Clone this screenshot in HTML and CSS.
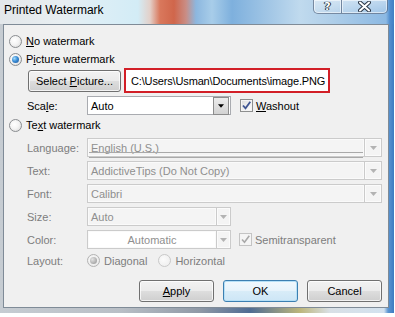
FILE: index.html
```html
<!DOCTYPE html>
<html>
<head>
<meta charset="utf-8">
<title>Printed Watermark</title>
<link rel="stylesheet" href="styles.css">
</head>
<body>
<div class="window">
  <div class="titlebar">
    <div class="title">Printed Watermark</div>
    <div class="caption">
      <div class="cbtn help"><span class="qmark">?</span></div>
      <div class="cbtn close">
        <svg width="13" height="11" viewBox="0 0 13 11"><path d="M2 1.5 L11 9.5 M11 1.5 L2 9.5" stroke="#2b3645" stroke-width="4" stroke-linecap="round"/><path d="M2 1.5 L11 9.5 M11 1.5 L2 9.5" stroke="#fff" stroke-width="2" stroke-linecap="round"/></svg>
      </div>
    </div>
  </div>
  <div class="client">
    <div class="opt"><span class="radio"></span><span><u>N</u>o watermark</span></div>
    <div class="opt r2"><span class="radio on"></span><span>P<u>i</u>cture watermark</span></div>
    <div class="pic-row">
      <div class="btn select-btn"><span>Select <u>P</u>icture...</span></div>
      <div class="path">C:\Users\Usman\Documents\image.PNG</div>
    </div>
    <div class="row scale-row">
      <span class="lbl">Sca<u>l</u>e:</span>
      <div class="combo short enabled">
        <span class="field">Auto</span>
        <span class="dd"><svg width="7" height="4" viewBox="0 0 7 4"><path d="M0 0H7L3.5 4Z" fill="#000"/></svg></span>
      </div>
      <span class="check"><svg width="11" height="11" viewBox="0 0 11 11"><path d="M2 5.5 L4.5 8.3 L9.3 1.8" fill="none" stroke="#3f5592" stroke-width="1.8"/></svg></span>
      <span class="check-lbl"><u>W</u>ashout</span>
    </div>
    <div class="opt r5"><span class="radio"></span><span>Te<u>x</u>t watermark</span></div>
    <div class="row dis first">
      <span class="lbl">Language:</span>
      <div class="combo full">
        <span class="field lang">English (U.S.)</span>
        <span class="dd"><svg width="7" height="4" viewBox="0 0 7 4"><path d="M0 0H7L3.5 4Z" fill="#b3b3b3"/></svg></span>
      </div>
    </div>
    <div class="row dis">
      <span class="lbl">Text:</span>
      <div class="combo full">
        <span class="field">AddictiveTips (Do Not Copy)</span>
        <span class="dd"><svg width="7" height="4" viewBox="0 0 7 4"><path d="M0 0H7L3.5 4Z" fill="#b3b3b3"/></svg></span>
      </div>
    </div>
    <div class="row dis">
      <span class="lbl">Font:</span>
      <div class="combo full">
        <span class="field">Calibri</span>
        <span class="dd"><svg width="7" height="4" viewBox="0 0 7 4"><path d="M0 0H7L3.5 4Z" fill="#b3b3b3"/></svg></span>
      </div>
    </div>
    <div class="row dis">
      <span class="lbl">Size:</span>
      <div class="combo short">
        <span class="field">Auto</span>
        <span class="dd"><svg width="7" height="4" viewBox="0 0 7 4"><path d="M0 0H7L3.5 4Z" fill="#b3b3b3"/></svg></span>
      </div>
    </div>
    <div class="row dis">
      <span class="lbl">Color:</span>
      <div class="combo short">
        <span class="field color">Automatic</span>
        <span class="dd"><svg width="7" height="4" viewBox="0 0 7 4"><path d="M0 0H7L3.5 4Z" fill="#b3b3b3"/></svg></span>
      </div>
      <span class="check disabled"><svg width="11" height="11" viewBox="0 0 11 11"><path d="M2 5.5 L4.5 8.3 L9.3 1.8" fill="none" stroke="#a9a9a9" stroke-width="1.6"/></svg></span>
      <span class="check-lbl">Semitransparent</span>
    </div>
    <div class="row dis layout-row">
      <span class="lbl">Layout:</span>
      <span class="radio dis-on"></span><span class="rtext">Diagonal</span>
      <span class="radio dis-off horiz"></span><span class="rtext">Horizontal</span>
    </div>
    <div class="buttons">
      <div class="btn"><span><u>A</u>pply</span></div>
      <div class="btn default"><span>OK</span></div>
      <div class="btn"><span>Cancel</span></div>
    </div>
  </div>
</div>
</body>
</html>
```
FILE: styles.css
```css
* { box-sizing: border-box; }
html, body { margin: 0; padding: 0; }
body {
  background: #fff;
  font-family: "Liberation Sans", Arial, sans-serif;
  font-size: 11px;
  color: #000;
}
.window {
  width: 394px;
  height: 313px;
  display: flex;
  flex-direction: column;
  background:
    linear-gradient(90deg, #e3e7ea 0px, #e8eef1 60px, #dceef6 100px, #d3ecf6 138px, #e3d0c9 150px, #d9785c 160px, #d0664b 174px, #c98d85 186px, #8cb7df 196px, #a8cde9 212px, #7eb0dd 232px, #a3c7e6 270px, #c0daee 300px, #b0cfe9 330px, #8cb9e3 386px, #4f8dcf 390px, #3f7fc3 394px) 0 0 / 100% 24px no-repeat,
    linear-gradient(90deg, #c6ccd2 0px, #b9bfc6 120px, #8f99a6 200px, #4f6c93 250px, #bdb67c 300px, #d9e0e6 330px, #d3e2ef 384px, #5d97d2 388px, #3c7bc1 394px);
}
.titlebar {
  height: 24px;
  flex: none;
  display: flex;
  justify-content: space-between;
  align-items: flex-start;
}
.title {
  font-size: 12px;
  line-height: 16px;
  padding: 2px 0 0 4px;
}
.caption {
  display: flex;
  margin-right: 6px;
}
.cbtn {
  height: 14px;
  display: flex;
  align-items: center;
  justify-content: center;
  border: 1px solid rgba(45, 65, 95, 0.55);
  border-top: none;
  background: linear-gradient(rgba(255,255,255,0.45), rgba(255,255,255,0.18));
  box-shadow: inset 0 0 0 1px rgba(255,255,255,0.55);
}
.help {
  width: 28px;
  border-right: none;
  border-bottom-left-radius: 5px;
}
.close {
  width: 47px;
  border-bottom-right-radius: 5px;
}
.qmark {
  font-family: "DejaVu Sans", sans-serif;
  font-weight: bold;
  font-size: 11px;
  line-height: 12px;
  color: #fff;
  text-shadow: 0 0 1px #1e2a3a, 0 0 1px #1e2a3a, 1px 0 0 #2b3645, -1px 0 0 #2b3645;
}
.client {
  flex: 1;
  margin: 0 5px 5px 3px;
  border: 1px solid #7f8b97;
  background: #f0f0f0;
  padding: 10px 6px 5px 5px;
  display: flex;
  flex-direction: column;
}
.opt {
  display: flex;
  align-items: center;
  height: 13px;
  gap: 4px;
  line-height: 13px;
}
.r2 { margin-top: 5px; }
.r5 { margin-top: 4px; }
.radio {
  width: 13px;
  height: 13px;
  flex: none;
  border-radius: 50%;
  border: 1px solid #8a8d90;
  background: radial-gradient(circle at 40% 40%, #ffffff 0%, #f4f4f4 45%, #d4d4d4 100%);
  display: flex;
  align-items: center;
  justify-content: center;
}
.radio.on::after {
  content: "";
  width: 7px;
  height: 7px;
  border-radius: 50%;
  background: radial-gradient(circle at 35% 35%, #a6dcfb 0%, #3b8ed6 45%, #1a4f94 100%);
}
.radio.dis-on {
  border-color: #b3b3b3;
  background: radial-gradient(circle at 40% 40%, #fafafa, #e6e6e6);
}
.radio.dis-on::after {
  content: "";
  width: 7px;
  height: 7px;
  border-radius: 50%;
  background: radial-gradient(circle at 35% 35%, #e3e3e3 0%, #a9a9a9 70%);
}
.radio.dis-off {
  border-color: #c9c9c9;
  background: radial-gradient(circle at 40% 40%, #fbfbfb, #ececec);
}
.pic-row {
  display: flex;
  align-items: center;
  gap: 3px;
  height: 25px;
  margin: 2px 0 0 19px;
}
.btn {
  width: 75px;
  height: 22px;
  flex: none;
  display: flex;
  align-items: center;
  justify-content: center;
  border: 1px solid #707070;
  border-radius: 3px;
  background: linear-gradient(#f2f2f2 0%, #ebebeb 48%, #dddddd 52%, #cfcfcf 100%);
  box-shadow: inset 0 0 0 1px rgba(255,255,255,0.75);
  color: #000;
  white-space: nowrap;
}
.select-btn { width: 93px; }
.btn.default {
  border-color: #3c7fb1;
  background: linear-gradient(#f1f8fd 0%, #e7f3fb 48%, #d8ecf8 52%, #cde6f6 100%);
  box-shadow: inset 0 0 0 1px #b6e0f7;
}
.path {
  width: 206px;
  height: 25px;
  border: 2px solid #d21f27;
  background: #fff;
  padding-left: 5px;
  display: flex;
  align-items: center;
  white-space: nowrap;
  letter-spacing: -0.15px;
}
.row {
  display: flex;
  align-items: center;
  height: 19px;
  margin: 4px 0 0 18px;
}
.scale-row { margin-top: 3px; }
.row.first { margin-top: 6px; }
.lbl {
  width: 60px;
  flex: none;
}
.dis { color: #7d7d7d; }
.combo {
  display: flex;
  height: 19px;
  flex: none;
}
.combo.short { width: 144px; }
.combo.full { width: 295px; }
.combo .field {
  flex: 1;
  position: relative;
  display: flex;
  align-items: center;
  padding-left: 3px;
  border: 1px solid #cbcbcb;
  background: #f4f4f4;
  box-shadow: inset 0 0 0 1px #fafafa;
  color: #8f8f8f;
  white-space: nowrap;
}
.combo .dd {
  width: 17px;
  flex: none;
  display: flex;
  align-items: center;
  justify-content: center;
  border: 1px solid #cbcbcb;
  border-left: none;
  background: #f4f4f4;
  box-shadow: inset 0 0 0 1px #fbfbfb;
}
.combo.short .dd { width: 14px; }
.field.lang::after {
  content: "";
  position: absolute;
  left: 1px;
  right: 1px;
  top: 13px;
  height: 4px;
  border-top: 1px solid #a9a9a9;
  border-bottom: 1px solid #a9a9a9;
}
.field.color {
  background: #fff;
  justify-content: center;
  padding-left: 0;
}
.combo.enabled .field {
  background: #fff;
  border-color: #a9abb0;
  box-shadow: none;
  color: #000;
  border-right: none;
}
.combo.enabled .dd {
  width: 18px;
  border: 1px solid #a9abb0;
  border-left: none;
  background: #fff;
  padding: 1px 1px 1px 0;
  box-shadow: none;
}
.combo.enabled .dd svg {
  box-sizing: content-box;
  padding: 6px 4px;
  border: 1px solid #8c8c8c;
  background: linear-gradient(#ececec, #d2d2d2);
}
.check {
  width: 13px;
  height: 13px;
  flex: none;
  margin-left: 9px;
  border: 1px solid #8e8f8f;
  background: linear-gradient(135deg, #dcdcdc, #ffffff);
  box-shadow: inset 0 0 0 1px #f4f4f4;
  display: flex;
  align-items: center;
  justify-content: center;
}
.check.disabled {
  margin-left: 8px;
  border-color: #c4c4c4;
  background: #f5f5f5;
}
.check-lbl {
  margin-left: 3px;
  white-space: nowrap;
}
.layout-row {
  height: 13px;
  margin-top: 5px;
}
.rtext { margin-left: 4px; }
.radio.horiz { margin-left: 11px; }
.buttons {
  display: flex;
  justify-content: flex-end;
  gap: 9px;
  margin-top: 13px;
}
```
